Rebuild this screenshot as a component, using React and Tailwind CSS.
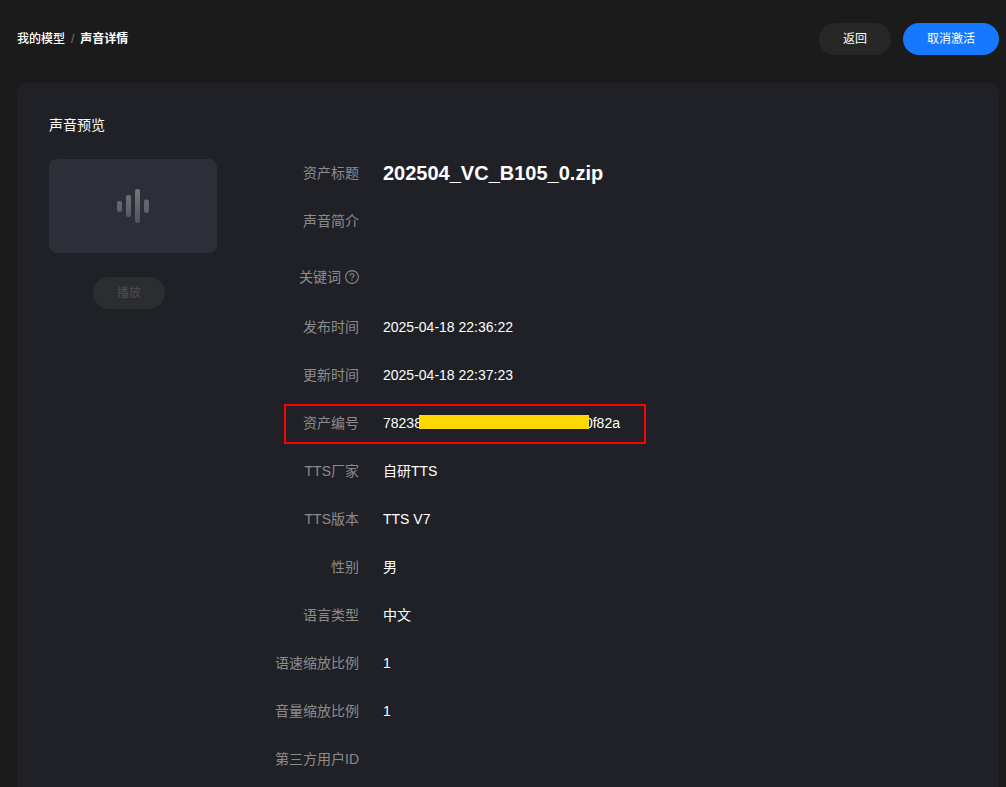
import clsx from "clsx";

const details = [
  { label: "发布时间", value: "2025-04-18 22:36:22" },
  { label: "更新时间", value: "2025-04-18 22:37:23" },
  { label: "资产编号", value: <MaskedId start="78238" end="0f82a" />, marked: true },
  { label: "TTS厂家", value: "自研TTS" },
  { label: "TTS版本", value: "TTS V7" },
  { label: "性别", value: "男" },
  { label: "语言类型", value: "中文" },
  { label: "语速缩放比例", value: "1" },
  { label: "音量缩放比例", value: "1" },
  { label: "第三方用户ID", value: "" },
];

function MaskedId({ start, end }) {
  return (
    <span className="flex items-center">
      {start}
      <span className="relative w-[163px] h-[14px]">
        <span className="absolute -top-px bottom-px -left-[3px] -right-1 bg-[#ffd800]" />
      </span>
      {end}
    </span>
  );
}

const PillButton = ({ children, className, ...props }) => (
  <button
    type="button"
    className={clsx("h-8 px-6 rounded-full text-xs", className)}
    {...props}
  >
    {children}
  </button>
);

const WaveIcon = () => (
  <svg width="32" height="34" viewBox="0 0 32 34" aria-hidden="true">
    <defs>
      <linearGradient id="wave" x1="0" y1="0" x2="0" y2="34" gradientUnits="userSpaceOnUse">
        <stop offset="0" stopColor="#74767c" />
        <stop offset="1" stopColor="#51545d" />
      </linearGradient>
    </defs>
    <g fill="url(#wave)">
      <rect x="0" y="12" width="5" height="11" rx="2.2" />
      <rect x="9" y="6" width="5" height="22" rx="2.2" />
      <rect x="18" y="0" width="5" height="34" rx="2.2" />
      <rect x="27" y="10.5" width="5" height="13.5" rx="2.2" />
    </g>
  </svg>
);

const QuestionIcon = () => (
  <svg width="14" height="14" viewBox="0 0 14 14" fill="none" stroke="currentColor" aria-hidden="true">
    <circle cx="7" cy="7" r="6.4" strokeWidth="1.1" />
    <path d="M5 5.6C5 4.4 5.9 3.7 7 3.7s2 .7 2 1.8c0 .8-.5 1.3-1.1 1.6-.6.3-.9.6-.9 1.2" strokeWidth="1.1" />
    <circle cx="7" cy="10" r="0.7" fill="currentColor" stroke="none" />
  </svg>
);

const Row = ({ label, children, marked, className }) => (
  <div className={clsx("relative flex items-center h-8", className)}>
    <dt className="flex items-center justify-end gap-1 w-[94px] shrink-0 text-[#8c8c8e]">
      {label}
    </dt>
    <dd className="ml-6">{children}</dd>
    {marked && (
      <span className="absolute -top-[3px] left-[19px] w-[362px] h-10 border-2 border-[#f00] pointer-events-none" />
    )}
  </div>
);

const App = () => {
  return (
    <div
      className="flex flex-col min-h-screen bg-[#1b1b1b] text-white text-sm pl-[17px] pr-[7px]"
      style={{ fontFamily: '"Liberation Sans", "Noto Sans CJK SC", sans-serif' }}
    >
      <header className="flex items-center justify-between pt-[23px] pb-7">
        <nav className="flex items-center gap-1.5 text-xs font-medium">
          <a href="#models">我的模型</a>
          <span className="text-[#777] font-normal">/</span>
          <span className="font-bold">声音详情</span>
        </nav>
        <div className="flex gap-3">
          <PillButton className="bg-[#272727]">返回</PillButton>
          <PillButton className="bg-[#1677ff]">取消激活</PillButton>
        </div>
      </header>

      <main className="flex-1 bg-[#202126] rounded-t-lg px-8 pt-8">
        <h2 className="leading-5">声音预览</h2>
        <div className="flex pt-[22px]">
          <section className="w-[216px] shrink-0 pt-0.5">
            <div className="flex items-center justify-center w-[168px] h-[94px] rounded-lg bg-[#2d2f38]">
              <WaveIcon />
            </div>
            <div className="flex justify-center w-40 pt-6">
              <PillButton className="bg-[#2c2d31] text-[#4d4e51]" disabled>
                播放
              </PillButton>
            </div>
          </section>

          <dl className="flex-1">
            <Row label="资产标题" className="mb-4">
              <span className="text-xl font-bold">202504_VC_B105_0.zip</span>
            </Row>
            <Row label="声音简介" className="mb-6" />
            <Row
              label={
                <>
                  关键词
                  <QuestionIcon />
                </>
              }
              className="mb-[18px]"
            />
            <div className="flex flex-col gap-4">
              {details.map((item) => (
                <Row key={item.label} label={item.label} marked={item.marked}>
                  {item.value}
                </Row>
              ))}
            </div>
          </dl>
        </div>
      </main>
    </div>
  );
};

export default App;
